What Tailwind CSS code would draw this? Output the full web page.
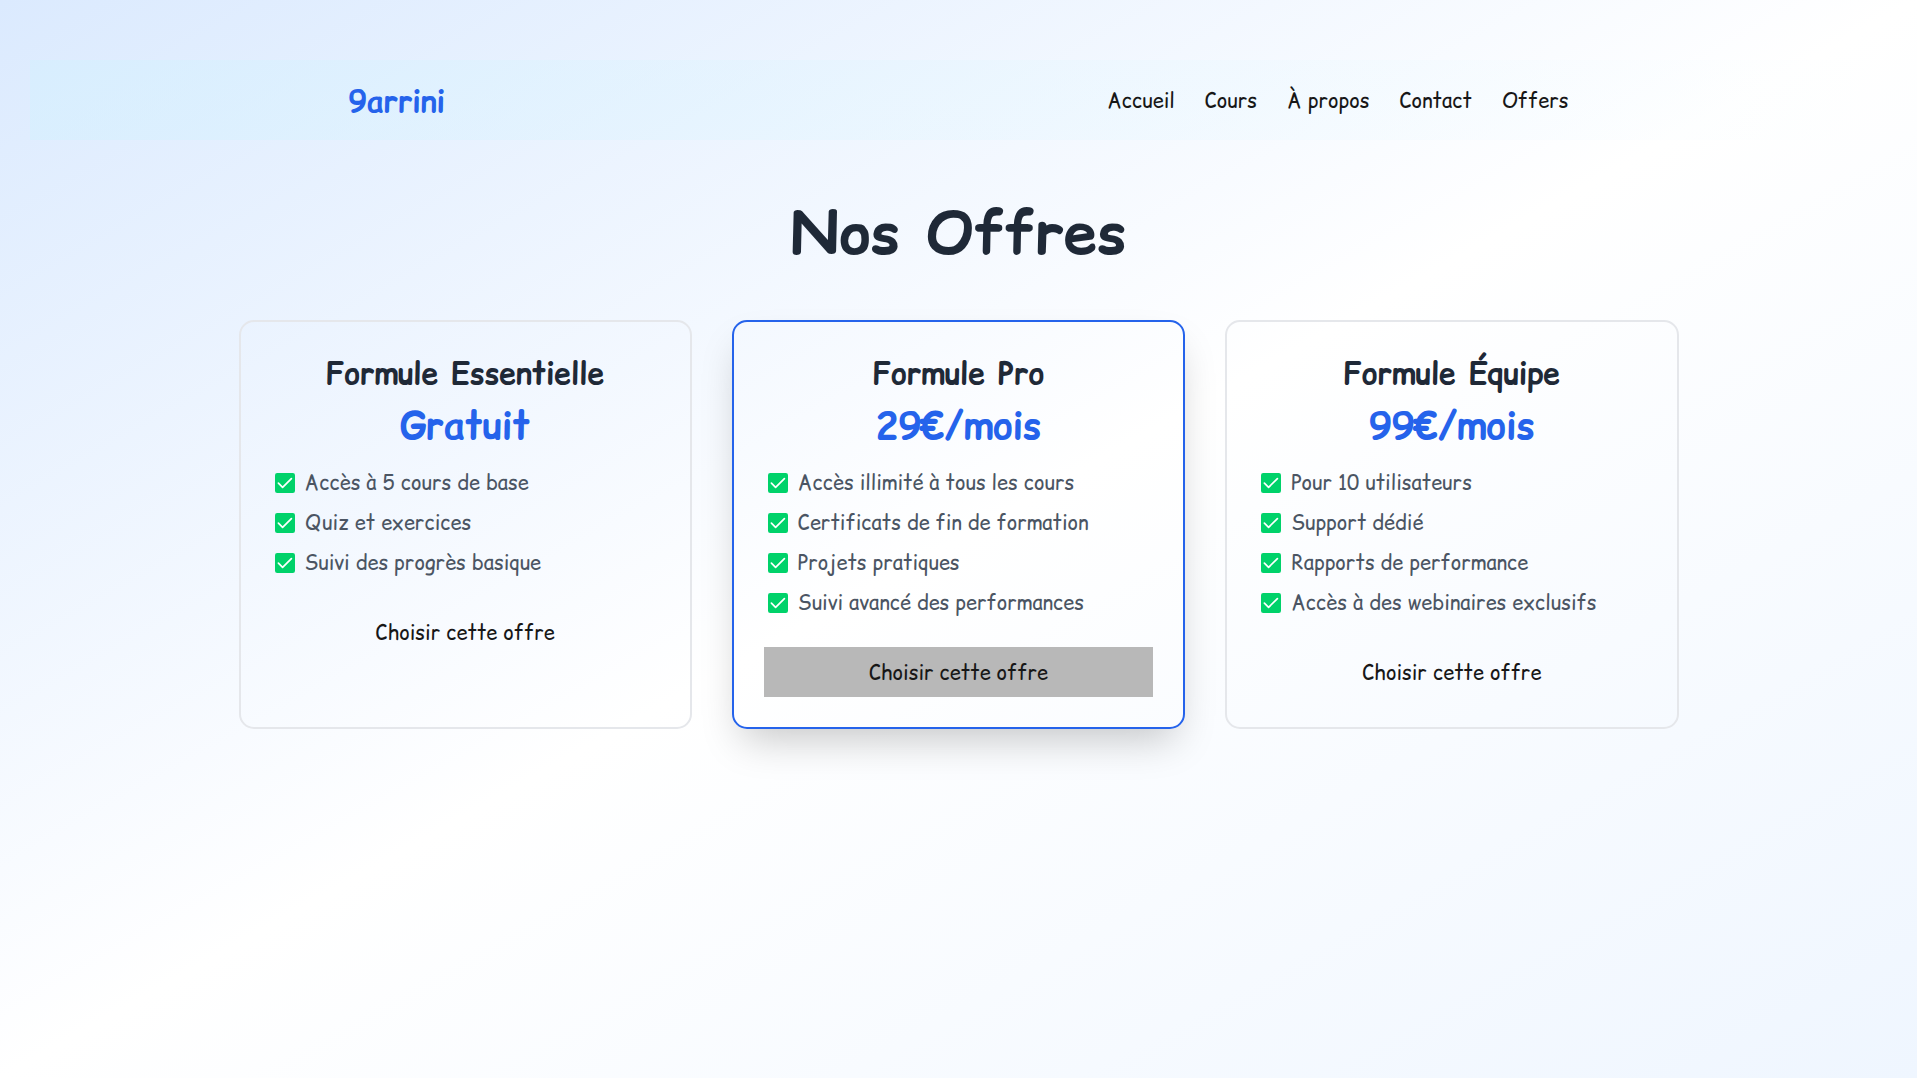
<!DOCTYPE html>
<html lang="fr" class="text-[20px]">
<head>
<meta charset="utf-8">
<meta name="viewport" content="width=device-width, initial-scale=1">
<title>9arrini – Nos Offres</title>
<script src="https://cdn.jsdelivr.net/npm/@tailwindcss/browser@4"></script>
</head>
<body class="min-h-screen bg-linear-to-br from-[#dbeafe] via-white to-[#eff6ff] px-6 py-12 font-['Comic_Relief','Comic_Sans_MS',cursive] text-base text-[#171717]">
<svg class="hidden" aria-hidden="true">
  <symbol id="check" viewBox="0 0 20 20">
    <rect width="20" height="20" rx="2.2" fill="#00d26a"/>
    <path d="M3.4 10.2 7.6 14.3 16.4 5.6" fill="none" stroke="#fff" stroke-width="1.7" stroke-linecap="round" stroke-linejoin="round"/>
  </symbol>
</svg>

<header class="bg-linear-to-r from-[#cff1ff]/40 to-white/20">
  <nav class="mx-auto flex h-16 max-w-5xl items-center justify-between px-6 pt-[2px]">
    <a href="#" class="text-2xl font-bold text-[#2563eb]">9arrini</a>
    <ul class="flex gap-6">
      <li><a href="#">Accueil</a></li>
      <li><a href="#">Cours</a></li>
      <li><a href="#">À propos</a></li>
      <li><a href="#">Contact</a></li>
      <li><a href="#">Offers</a></li>
    </ul>
  </nav>
</header>

<main class="mx-auto max-w-6xl">
  <h1 class="pt-[63px] pb-[57px] text-center text-5xl font-bold text-[#1f2937]">Nos Offres</h1>
  <div class="grid gap-8 md:grid-cols-3">

    <section class="rounded-xl border-2 border-[#e5e7eb] p-6">
      <h2 class="mb-2 pt-px text-center text-2xl font-bold text-[#1f2937]">Formule Essentielle</h2>
      <p class="mb-4 text-center text-3xl font-bold text-[#2563eb]">Gratuit</p>
      <ul class="mb-[29px] space-y-2 pl-[4px] text-[#4b5563]">
        <li class="flex items-center gap-2"><svg class="size-4 shrink-0"><use href="#check"/></svg>Accès à 5 cours de base</li>
        <li class="flex items-center gap-2"><svg class="size-4 shrink-0"><use href="#check"/></svg>Quiz et exercices</li>
        <li class="flex items-center gap-2"><svg class="size-4 shrink-0"><use href="#check"/></svg>Suivi des progrès basique</li>
      </ul>
      <button type="button" class="w-full pt-[11px] pb-[9px]">Choisir cette offre</button>
    </section>

    <section class="rounded-xl border-2 border-[#2563eb] p-6 shadow-[0_20px_40px_-10px_rgba(0,0,0,0.22)]">
      <h2 class="mb-2 pt-px text-center text-2xl font-bold text-[#1f2937]">Formule Pro</h2>
      <p class="mb-4 text-center text-3xl font-bold text-[#2563eb]">29€/mois</p>
      <ul class="mb-[29px] space-y-2 pl-[4px] text-[#4b5563]">
        <li class="flex items-center gap-2"><svg class="size-4 shrink-0"><use href="#check"/></svg>Accès illimité à tous les cours</li>
        <li class="flex items-center gap-2"><svg class="size-4 shrink-0"><use href="#check"/></svg>Certificats de fin de formation</li>
        <li class="flex items-center gap-2"><svg class="size-4 shrink-0"><use href="#check"/></svg>Projets pratiques</li>
        <li class="flex items-center gap-2"><svg class="size-4 shrink-0"><use href="#check"/></svg>Suivi avancé des performances</li>
      </ul>
      <button type="button" class="w-full bg-[#b8b8b8] pt-[11px] pb-[9px]">Choisir cette offre</button>
    </section>

    <section class="rounded-xl border-2 border-[#e5e7eb] p-6">
      <h2 class="mb-2 pt-px text-center text-2xl font-bold text-[#1f2937]">Formule Équipe</h2>
      <p class="mb-4 text-center text-3xl font-bold text-[#2563eb]">99€/mois</p>
      <ul class="mb-[29px] space-y-2 pl-[4px] text-[#4b5563]">
        <li class="flex items-center gap-2"><svg class="size-4 shrink-0"><use href="#check"/></svg>Pour 10 utilisateurs</li>
        <li class="flex items-center gap-2"><svg class="size-4 shrink-0"><use href="#check"/></svg>Support dédié</li>
        <li class="flex items-center gap-2"><svg class="size-4 shrink-0"><use href="#check"/></svg>Rapports de performance</li>
        <li class="flex items-center gap-2"><svg class="size-4 shrink-0"><use href="#check"/></svg>Accès à des webinaires exclusifs</li>
      </ul>
      <button type="button" class="w-full pt-[11px] pb-[9px]">Choisir cette offre</button>
    </section>

  </div>
</main>
</body>
</html>
